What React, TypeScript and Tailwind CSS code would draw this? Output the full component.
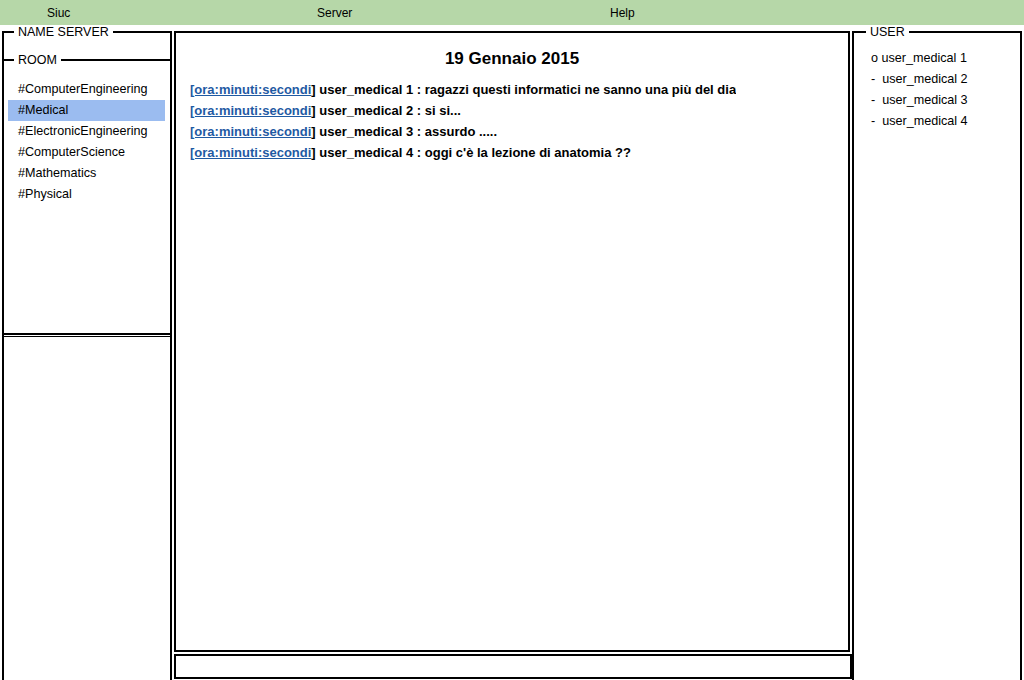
const rooms = [
  "#ComputerEngineering",
  "#Medical",
  "#ElectronicEngineering",
  "#ComputerScience",
  "#Mathematics",
  "#Physical",
];

const users = [
  "o user_medical 1",
  "-  user_medical 2",
  "-  user_medical 3",
  "-  user_medical 4",
];

const messages = [
  "user_medical 1 : ragazzi questi informatici ne sanno una più del diavolo",
  "user_medical 2 : si si...",
  "user_medical 3 : assurdo .....",
  "user_medical 4 : oggi c'è la lezione di anatomia ??",
];

export default function App() {
  return (
    <div
      className="w-[1024px] h-[680px] flex flex-col bg-white text-black overflow-hidden"
      style={{ fontFamily: '"Liberation Sans", Arial, sans-serif' }}
    >
      {/* Menu bar */}
      <div className="h-[25px] shrink-0 bg-[#b6d7a8] flex items-center pl-[47px] text-[12px]">
        <span className="w-[270px]">Siuc</span>
        <span className="w-[293px]">Server</span>
        <span>Help</span>
      </div>

      <div className="flex-1 min-h-0 flex">
        {/* Left: name server */}
        <fieldset className="ml-[2px] w-[170px] shrink-0 border-l-2 border-t-2 border-r-2 border-black flex flex-col">
          <legend className="ml-[10px] px-[4px] text-[12.5px] leading-[14px]">NAME SERVER</legend>
          <fieldset className="mt-[14px] h-[282px] border-t-2 border-b-2 border-black">
            <legend className="ml-[10px] px-[4px] text-[12.5px] leading-[14px]">ROOM</legend>
            <div className="pt-[12px] flex flex-col">
              {rooms.map((r) => (
                <div
                  key={r}
                  className={
                    "ml-[4px] mr-[5px] h-[21px] pl-[10px] flex items-center text-[12.6px] " +
                    (r === "#Medical" ? "bg-[#9bbcf0]" : "")
                  }
                >
                  {r}
                </div>
              ))}
            </div>
          </fieldset>
          <div className="flex-1 border-t border-black mt-px" />
        </fieldset>

        {/* Center: chat */}
        <div className="w-[678px] shrink-0 flex flex-col pt-[6px] ml-[2px]">
          <div className="h-[621px] w-[676px] border-2 border-black flex flex-col pt-[16px] pl-[14px] font-bold">
            <div className="text-center text-[17px] leading-[20px] pr-[14px]">19 Gennaio 2015</div>
            <div className="mt-[10px] flex flex-col">
              {messages.map((m) => (
                <div
                  key={m}
                  className="h-[21px] max-w-[546px] overflow-hidden whitespace-nowrap flex items-center text-[13px]"
                >
                  <span className="text-[#1f5aa3] underline">[ora:minuti:secondi</span>
                  <span>]&nbsp;{m}</span>
                </div>
              ))}
            </div>
          </div>
          <div className="mt-[2px] h-[25px] border-2 border-black" />
        </div>

        {/* Right: users */}
        <fieldset className="w-[170px] shrink-0 border-l-2 border-t-2 border-r-2 border-black">
          <legend className="ml-[12px] px-[4px] text-[12.5px] leading-[14px]">USER</legend>
          <div className="pt-[9px] pl-[17px] flex flex-col">
            {users.map((u) => (
              <div key={u} className="h-[21px] flex items-center text-[12.6px] whitespace-pre">
                {u}
              </div>
            ))}
          </div>
        </fieldset>
      </div>
    </div>
  );
}
